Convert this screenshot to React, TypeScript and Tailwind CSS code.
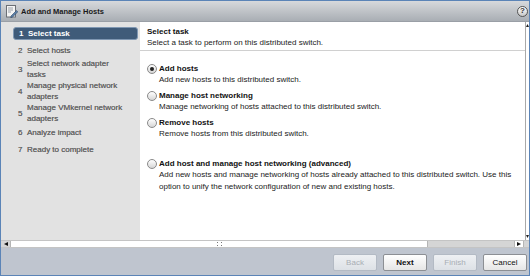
import React from 'react';

const steps = [
  { n: '1', label: 'Select task', mt: 'mt-[5px]' },
  { n: '2', label: 'Select hosts', mt: 'mt-[5px]' },
  { n: '3', label: 'Select network adapter tasks', mt: 'mt-[2px]' },
  { n: '4', label: 'Manage physical network adapters', mt: 'mt-0' },
  { n: '5', label: 'Manage VMkernel network adapters', mt: 'mt-0' },
  { n: '6', label: 'Analyze impact', mt: 'mt-[3px]' },
  { n: '7', label: 'Ready to complete', mt: 'mt-[6px]' },
];

const options = [
  { title: 'Add hosts', desc: 'Add new hosts to this distributed switch.', checked: true, mt: 'mt-[12px]' },
  { title: 'Manage host networking', desc: 'Manage networking of hosts attached to this distributed switch.', checked: false, mt: 'mt-[4px]' },
  { title: 'Remove hosts', desc: 'Remove hosts from this distributed switch.', checked: false, mt: 'mt-[4px]' },
  {
    title: 'Add host and manage host networking (advanced)',
    desc: 'Add new hosts and manage networking of hosts already attached to this distributed switch. Use this option to unify the network configuration of new and existing hosts.',
    checked: false,
    mt: 'mt-[18px]',
  },
];

const Radio: React.FC<{ checked: boolean }> = ({ checked }) => (
  <span className="w-[10px] h-[10px] shrink-0 rounded-full border border-[#8a8a8a] bg-gradient-to-b from-[#ffffff] to-[#d6d6d6] flex items-center justify-center">
    {checked && <span className="w-[4px] h-[4px] rounded-full bg-[#222]" />}
  </span>
);

const Button: React.FC<{ label: string; disabled?: boolean; bold?: boolean }> = ({ label, disabled, bold }) => (
  <div
    className={
      disabled
        ? 'w-[44px] h-[17px] rounded-[2px] border border-[#b3bac4] bg-gradient-to-b from-[#eef0f3] to-[#dde1e6] text-[#a8adb4] flex items-center justify-center'
        : 'w-[44px] h-[17px] rounded-[2px] border border-[#8c8f94] bg-gradient-to-b from-[#ffffff] to-[#e6e6e6] text-[#111] flex items-center justify-center' + (bold ? ' font-bold' : '')
    }
  >
    {label}
  </div>
);

const App: React.FC = () =>
{
  return (
    <div className="w-[530px] h-[276px] border border-[#5b84b7] flex flex-col bg-[#bfc5cf] font-['Liberation_Sans',Arial,sans-serif] text-[8px] leading-[11px] overflow-hidden">
      {/* title bar */}
      <div className="h-[21px] shrink-0 flex items-center bg-gradient-to-b from-[#d7d9dc] to-[#a9aeb4] border-b border-[#9a9fa6] pl-[4px] pr-[1px]">
        <svg width="13" height="13" viewBox="0 0 13 13" className="shrink-0">
          <rect x="1.5" y="0.5" width="9" height="11.5" fill="#f4f4f4" stroke="#6b6f75" />
          <line x1="3" y1="3" x2="8" y2="3" stroke="#9aa0a8" />
          <line x1="3" y1="5" x2="8" y2="5" stroke="#9aa0a8" />
          <line x1="3" y1="7" x2="6" y2="7" stroke="#9aa0a8" />
          <path d="M6 11 L11.5 5.5 L12.8 6.8 L7.3 12.3 L5.7 12.6 Z" fill="#5b7fa8" stroke="#2f4a6a" strokeWidth="0.6" />
        </svg>
        <span className="ml-[3px] font-bold text-[7.5px] text-[#1a1a1a]">Add and Manage Hosts</span>
        <div className="ml-auto w-[11px] h-[11px] rounded-full border border-[#555] bg-gradient-to-b from-[#ffffff] to-[#c8c8c8] flex items-center justify-center text-[8px] font-bold text-[#333] leading-none">?</div>
      </div>

      {/* main */}
      <div className="h-[218px] shrink-0 flex">
        <div className="w-[139px] shrink-0 bg-[#e2e2e2] flex flex-col pl-[12px] pr-[2px]">
          {steps.map((s) =>
            s.n === '1' ? (
              <div key={s.n} className={`${s.mt} h-[13px] rounded-[3px] bg-[#3f5b79] border border-[#7f97b2] flex items-center text-white font-bold`}>
                <span className="w-[14px] pl-[5px]">{s.n}</span>
                <span>{s.label}</span>
              </div>
            ) : (
              <div key={s.n} className={`${s.mt} flex items-center text-[#666] [text-shadow:0_0_0.4px_#666]`}>
                <span className="w-[14px] pl-[5px] shrink-0">{s.n}</span>
                <span className="w-[100px]">{s.label}</span>
              </div>
            )
          )}
        </div>

        <div className="flex-1 bg-white flex flex-col">
          <div className="pl-[7px] pt-[4px] h-[29px] border-b border-[#d0d0d0]">
            <div className="font-bold text-[#111]">Select task</div>
            <div className="text-[#222]">Select a task to perform on this distributed switch.</div>
          </div>
          <div className="pl-[7px] pr-[10px] flex flex-col">
            {options.map((o) => (
              <div key={o.title} className={o.mt}>
                <div className="flex items-center gap-[2px]">
                  <Radio checked={o.checked} />
                  <span className="font-bold text-[#111]">{o.title}</span>
                </div>
                <div className="pl-[12px] text-[#222] leading-[12px]">{o.desc}</div>
              </div>
            ))}
          </div>
        </div>

        {/* vertical scrollbar */}
        <div className="w-[4px] shrink-0 bg-white border-l border-[#a9a9a9] flex flex-col justify-between items-center py-[2px]">
          <svg width="3" height="3" viewBox="0 0 3 3"><path d="M0 3 L1.5 0 L3 3 Z" fill="#222" /></svg>
          <svg width="3" height="3" viewBox="0 0 3 3"><path d="M0 0 L3 0 L1.5 3 Z" fill="#222" /></svg>
        </div>
      </div>

      {/* horizontal scrollbar */}
      <div className="h-[8px] shrink-0 flex bg-[#d5d5d5] border-y border-[#c4c4c4]">
        <div className="w-[9px] flex items-center justify-center">
          <svg width="4" height="4" viewBox="0 0 4 4"><path d="M4 0 L0 2 L4 4 Z" fill="#111" /></svg>
        </div>
        <div className="w-[418px] bg-white border-x border-[#b5b5b5] flex items-center justify-center">
          <svg width="5" height="4" viewBox="0 0 5 4">
            <rect x="0" y="0" width="1" height="1" fill="#777" />
            <rect x="0" y="3" width="1" height="1" fill="#777" />
            <rect x="4" y="0" width="1" height="1" fill="#777" />
            <rect x="4" y="3" width="1" height="1" fill="#777" />
          </svg>
        </div>
        <div className="flex-1" />
        <div className="w-[10px] bg-white border-x border-[#b5b5b5] flex items-center justify-center">
          <svg width="4" height="4" viewBox="0 0 4 4"><path d="M0 0 L4 2 L0 4 Z" fill="#111" /></svg>
        </div>
        <div className="w-[5px]" />
      </div>

      {/* footer */}
      <div className="flex-1 flex items-center justify-end gap-[6px] pr-[2px] pt-[1px]">
        <Button label="Back" disabled />
        <Button label="Next" bold />
        <Button label="Finish" disabled />
        <Button label="Cancel" />
      </div>
    </div>
  );
};

export default App;
